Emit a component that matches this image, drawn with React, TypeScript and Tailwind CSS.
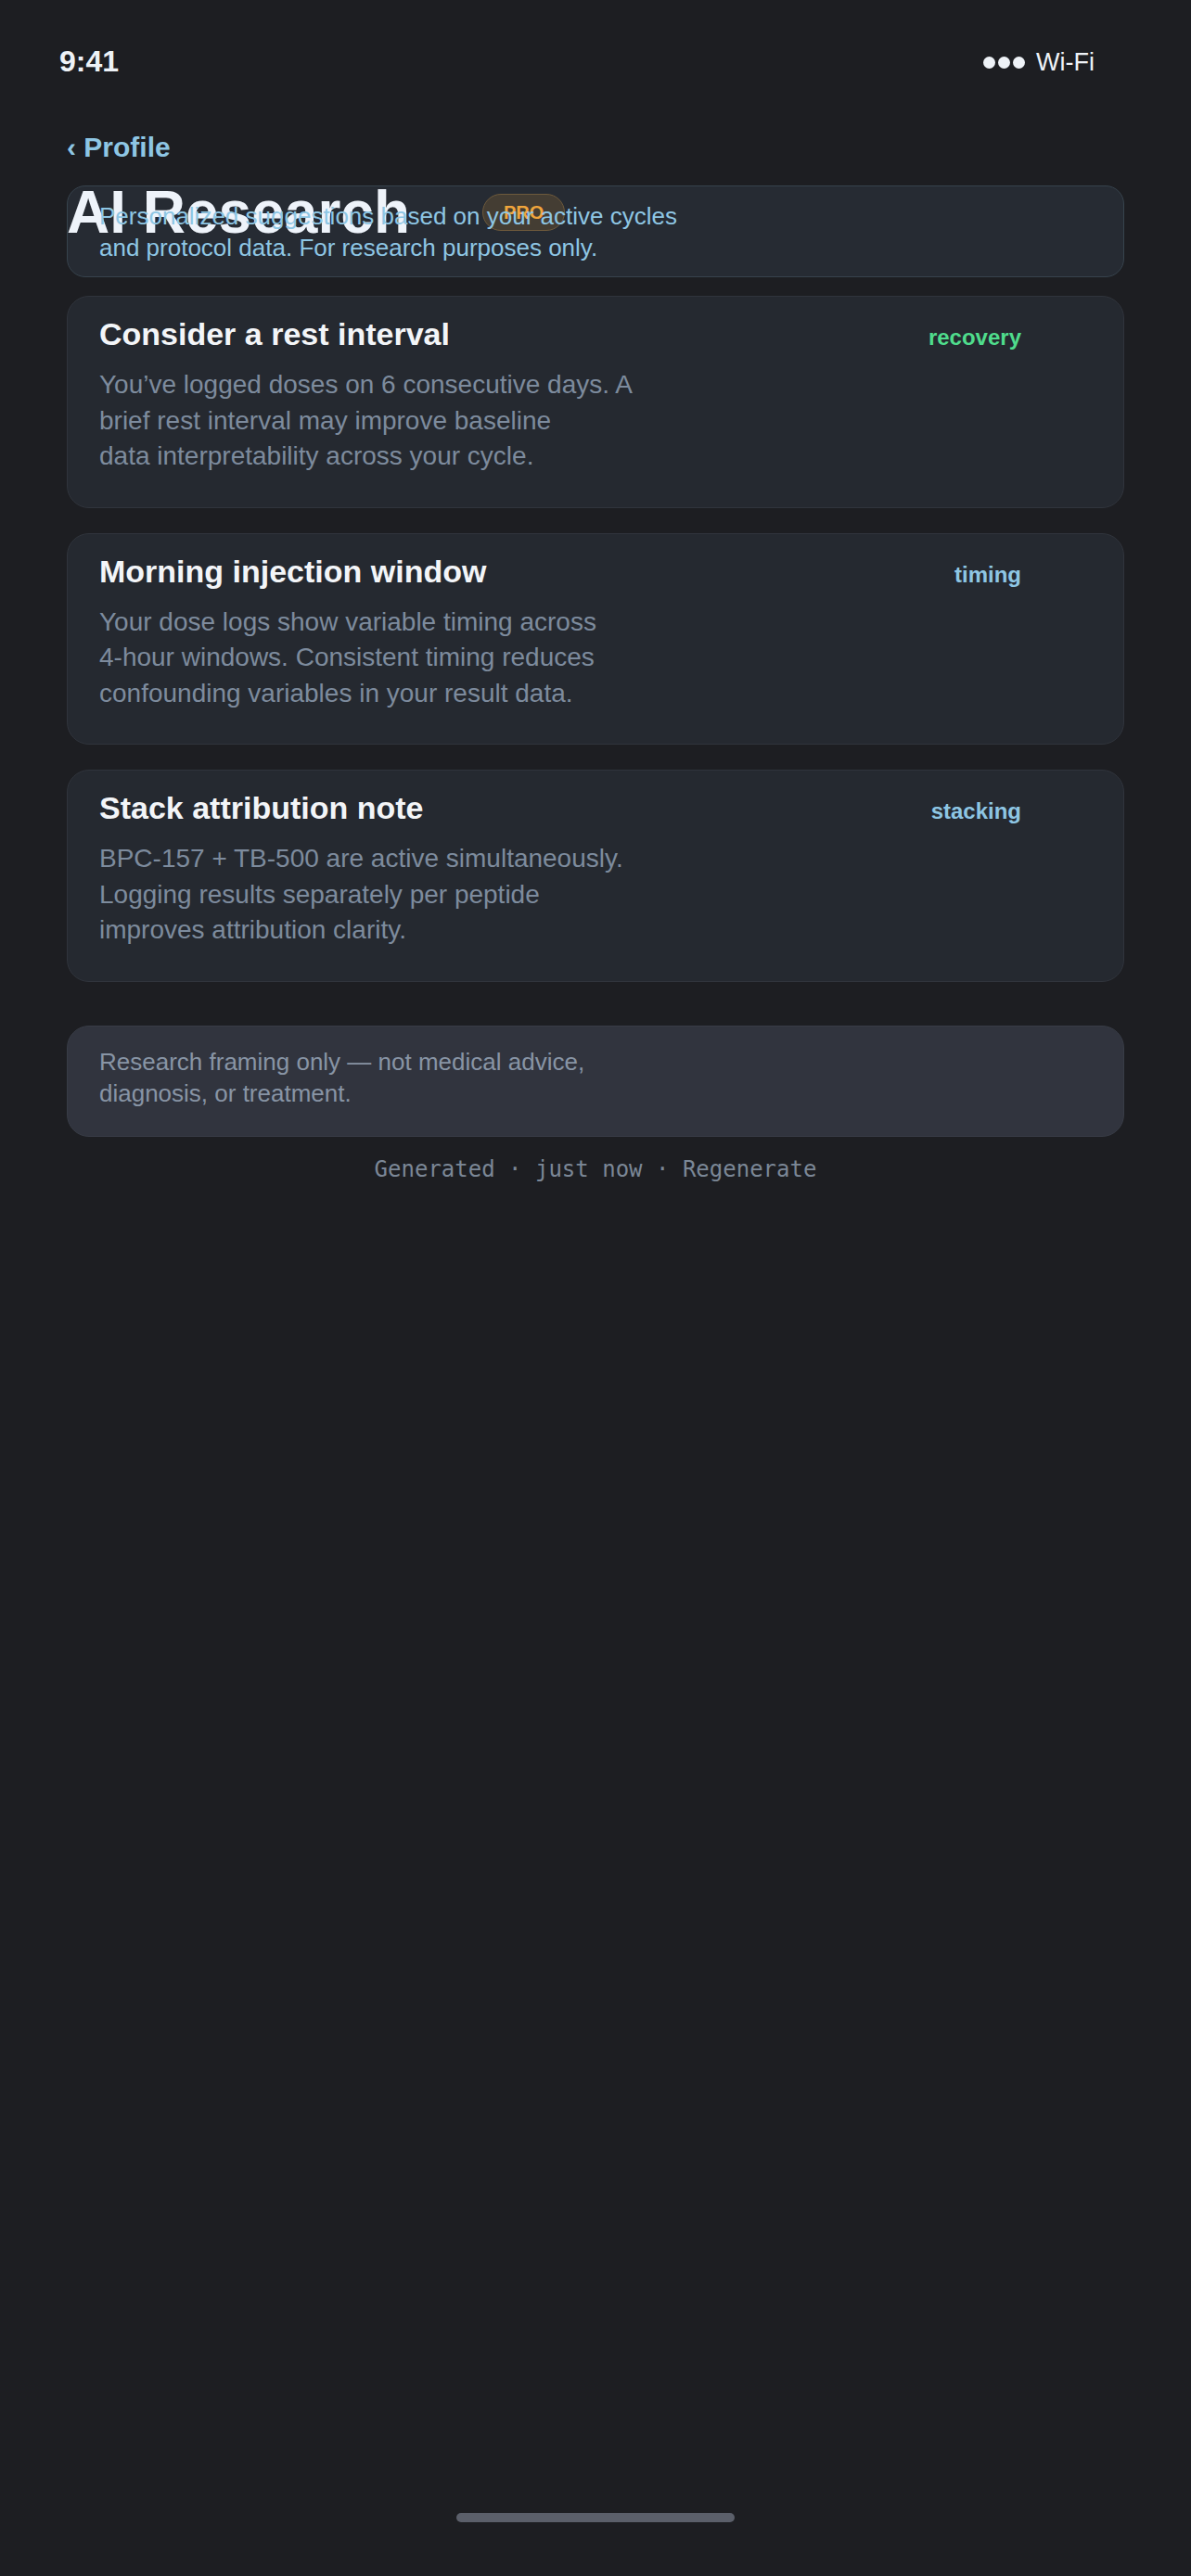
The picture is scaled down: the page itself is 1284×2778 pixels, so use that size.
const suggestions = [
  {
    id: 1,
    title: "Consider a rest interval",
    tag: "recovery",
    tagColor: "text-[#4fdc8c]",
    lines: [
      "You’ve logged doses on 6 consecutive days. A",
      "brief rest interval may improve baseline",
      "data interpretability across your cycle.",
    ],
  },
  {
    id: 2,
    title: "Morning injection window",
    tag: "timing",
    tagColor: "text-[#8ec6e4]",
    lines: [
      "Your dose logs show variable timing across",
      "4-hour windows. Consistent timing reduces",
      "confounding variables in your result data.",
    ],
  },
  {
    id: 3,
    title: "Stack attribution note",
    tag: "stacking",
    tagColor: "text-[#8ec6e4]",
    lines: [
      "BPC-157 + TB-500 are active simultaneously.",
      "Logging results separately per peptide",
      "improves attribution clarity.",
    ],
  },
];

function StatusBar() {
  return (
    <div className="flex justify-between items-center pt-[50px] pl-[64px] pr-[104px] text-[#eef2f7]">
      <span className="text-[32px] font-bold leading-none">9:41</span>
      <div className="flex items-center gap-[12px] mt-[3px]">
        <div className="flex gap-[3px]">
          <span className="w-[13px] h-[13px] rounded-full bg-[#eef2f7]" />
          <span className="w-[13px] h-[13px] rounded-full bg-[#eef2f7]" />
          <span className="w-[13px] h-[13px] rounded-full bg-[#eef2f7]" />
        </div>
        <span className="text-[27px] leading-none">Wi-Fi</span>
      </div>
    </div>
  );
}

export default function App() {
  return (
    <div className="min-h-screen flex flex-col bg-[#1d1e22] font-['Liberation_Sans',Arial,sans-serif]">
      <StatusBar />

      {/* block container on purpose: title row spills over the first card */}
      <div className="px-[72px] pt-[62px]">
        <div className="text-[30px] font-bold leading-none text-[#8ec6e4]">‹ Profile</div>

        <div className="mt-[23px] -mb-[61px] flex items-center h-[64px]">
          <h1 className="text-[64px] font-bold leading-none text-[#eef3fa]">AI Research</h1>
          <span className="ml-[78px] px-[22px] py-[9px] rounded-full border-[1.5px] border-[#6e5a3c] bg-[#443d33] text-[20px] font-bold leading-none text-[#f0a53c]">
            PRO
          </span>
        </div>

        <div className="rounded-[20px] border-[1.5px] border-[#37434d] bg-[#262b33] px-[34px] py-[14.5px]">
          <p className="max-w-[640px] text-[26px] leading-[34px] text-[#8ec6e4]">
            Personalized suggestions based on your active cycles and protocol data. For research purposes only.
          </p>
        </div>

        <div className="mt-[20px] flex flex-col gap-[27px]">
          {suggestions.map((s) => (
            <div
              key={s.id}
              className="rounded-[24px] border-[1.5px] border-[#30343c] bg-[#252930] px-[34px] pt-[23px] pb-[35px]"
            >
              <div className="flex items-baseline justify-between">
                <h2 className="text-[34px] font-bold leading-none text-[#f3f5f8]">{s.title}</h2>
                <span className={`mr-[76px] text-[24px] font-bold leading-none ${s.tagColor}`}>{s.tag}</span>
              </div>
              <p className="mt-[19px] text-[28px] leading-[38.5px] text-[#7d8b9d]">
                {s.lines.map((line, i) => (
                  <span key={i} className="block">
                    {line}
                  </span>
                ))}
              </p>
            </div>
          ))}
        </div>

        <div className="mt-[47px] rounded-[24px] border-[1.5px] border-[#383c46] bg-[#31343e] px-[34px] pt-[21px] pb-[29px]">
          <p className="max-w-[636px] text-[26px] leading-[34px] text-[#8894a5]">
            Research framing only — not medical advice, diagnosis, or treatment.
          </p>
        </div>

        <div className="mt-[23px] text-center font-['DejaVu_Sans_Mono',monospace] text-[24px] leading-none text-[#7b8796]">
          Generated · just now · Regenerate
        </div>
      </div>

      <div className="mt-auto mb-[58px] mx-auto w-[300px] h-[10px] rounded-full bg-[#5b5f6a]" />
    </div>
  );
}
